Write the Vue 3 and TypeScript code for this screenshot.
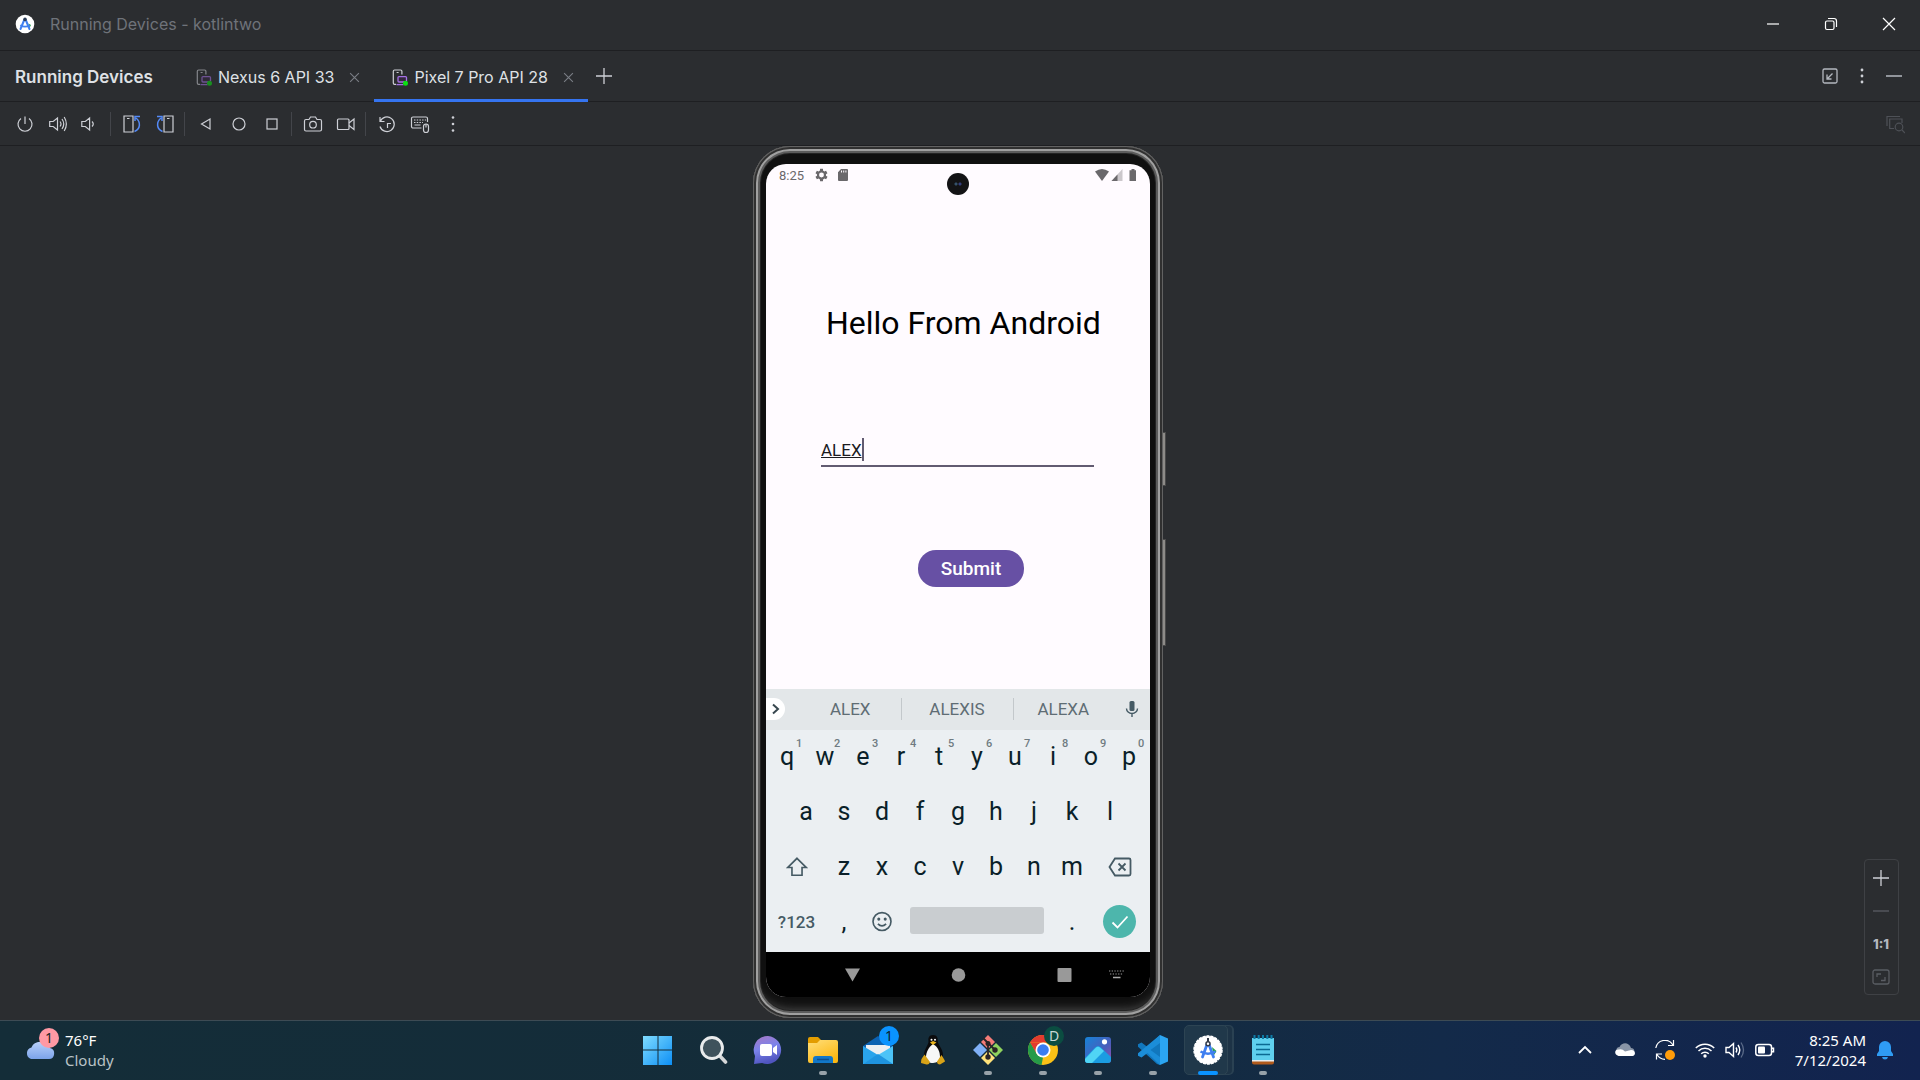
<script setup lang="ts">
import { ref } from 'vue'

interface Key {
  label: string
  hint?: string
}

const toolWindowTabs = [
  { name: 'Nexus 6 API 33', active: false },
  { name: 'Pixel 7 Pro API 28', active: true },
]

const topRow: Key[] = 'qwertyuiop'.split('').map((label, i) => ({ label, hint: String((i + 1) % 10) }))
const homeRow: string[] = 'asdfghjkl'.split('')
const bottomRow: string[] = 'zxcvbnm'.split('')
const suggestions: string[] = ['ALEX', 'ALEXIS', 'ALEXA']

const name = ref('ALEX')
</script>

<template>
  <div class="window">
    <header class="titlebar">
      <svg class="app-logo" viewBox="0 0 20 20" aria-hidden="true">
        <circle cx="10" cy="10" r="9.3" fill="#fff" />
        <path d="M13.5 9.5l2.5 1.5-1.5 3z" fill="#2ba24c" />
        <path d="M9.2 6 5.5 15M10.8 6l3.7 9" stroke="#3f7ff0" stroke-width="2" stroke-linecap="round" />
        <path d="M5.3 11.2q4.7 3 9.4 0" fill="none" stroke="#3f7ff0" stroke-width="1.8" />
        <circle cx="10" cy="5.4" r="1.8" fill="#2b3c55" />
      </svg>
      <h1>Running Devices - kotlintwo</h1>
      <div class="window-controls">
        <button aria-label="Minimize"><svg viewBox="0 0 16 16"><path d="M2 8h12" /></svg></button>
        <button aria-label="Restore">
          <svg viewBox="0 0 16 16"><rect x="2.5" y="5" width="8.5" height="8.5" rx="1.5" /><path d="M5 2.5h6a2.5 2.5 0 0 1 2.5 2.5v6" /></svg>
        </button>
        <button aria-label="Close"><svg viewBox="0 0 16 16"><path d="M2 2l12 12M14 2 2 14" /></svg></button>
      </div>
    </header>

    <nav class="tabbar">
      <h2>Running Devices</h2>
      <div v-for="tab in toolWindowTabs" :key="tab.name" class="tab" :class="{ active: tab.active }">
        <button class="tab-name">
          <svg class="tab-icon" viewBox="0 0 16 17" aria-hidden="true">
            <path d="M4 15.3H2.6A1.3 1.3 0 0 1 1.3 14V2.3A1.3 1.3 0 0 1 2.6 1h6a1.3 1.3 0 0 1 1.3 1.3v3.200M4.600 3.500h2" fill="none" stroke="#ced0d6" stroke-width="1.2" />
            <rect x="6" y="7.6" width="8.5" height="5.4" rx="1" fill="#35283f" stroke="#a571e6" stroke-width="1.3" />
            <path d="M4.500 15.600h7" stroke="#a571e6" stroke-width="1.3" />
            <circle cx="13.5" cy="14.3" r="2.5" fill="#0be012" />
          </svg>
          {{ tab.name }}
        </button>
        <button class="tab-close" :aria-label="`Close ${tab.name}`">
          <svg viewBox="0 0 10 10"><path d="M1 1l8 8M9 1 1 9" /></svg>
        </button>
      </div>
      <button class="tab-add" aria-label="New tab"><svg viewBox="0 0 16 16"><path d="M8 0v16M0 8h16" /></svg></button>
      <div class="tab-actions">
        <button aria-label="Undock">
          <svg viewBox="0 0 18 18"><rect x="2" y="2" width="14" height="14" rx="1.5" /><path d="M11.500 6.500 6 12M6 7.500V12h4.500" /></svg>
        </button>
        <button aria-label="Options">
          <svg viewBox="0 0 18 18" class="dots"><circle cx="9" cy="3" r="1.4" /><circle cx="9" cy="9" r="1.4" /><circle cx="9" cy="15" r="1.4" /></svg>
        </button>
        <button aria-label="Hide"><svg viewBox="0 0 18 18"><path d="M1 9h16" stroke-width="1.5" /></svg></button>
      </div>
    </nav>

    <div class="toolbar">
      <button aria-label="Power"><svg viewBox="0 0 20 20"><path d="M10 2.500V10M6 4.500a7 7 0 1 0 8 0" /></svg></button>
      <button aria-label="Volume up">
        <svg viewBox="0 0 20 20"><path d="M1.700 7.500h3.500L9.500 4v12L5.200 12.500H1.700zM12 7.500q2 2.500 0 5M14 5q3.500 5 0 10M16.200 3q4.300 7 0 14" /></svg>
      </button>
      <button aria-label="Volume down">
        <svg viewBox="0 0 20 20"><path d="M.8 7.500h3.500L8.600 4v12L4.300 12.500H.8zM11 7.500q2.500 2.500 0 5" /></svg>
      </button>
      <i class="divider"></i>
      <button aria-label="Rotate left">
        <svg viewBox="0 0 20 20"><path d="M11 2H2v16h9zM5 4.500h2.500" /><path class="blue" d="M12.500 17.500c6-2.500 6.500-9.500 1.500-13.500M18 2.500h-5V7" /></svg>
      </button>
      <button aria-label="Rotate right">
        <svg viewBox="0 0 20 20"><path d="M9 2h9v16H9zM12 4.500h2.500" /><path class="blue" d="M7.500 17.500C1.500 15 1 8 6 4M2 2.500h5V7" /></svg>
      </button>
      <i class="divider"></i>
      <button aria-label="Back"><svg viewBox="0 0 20 20"><path d="M14 5v10L5.500 10z" /></svg></button>
      <button aria-label="Home"><svg viewBox="0 0 20 20"><circle cx="10" cy="10" r="6" /></svg></button>
      <button aria-label="Overview"><svg viewBox="0 0 20 20"><rect x="5" y="5" width="10" height="10" /></svg></button>
      <i class="divider"></i>
      <button aria-label="Take screenshot">
        <svg viewBox="0 0 20 20"><path d="M3 5.500h3L7.500 3h5L14 5.500h3a1.500 1.500 0 0 1 1.500 1.500v8.500A1.500 1.500 0 0 1 17 17H3a1.500 1.500 0 0 1-1.500-1.500V7A1.500 1.500 0 0 1 3 5.500z" /><circle cx="10" cy="10.7" r="3.3" /></svg>
      </button>
      <button aria-label="Record screen">
        <svg viewBox="0 0 20 20"><rect x="1.5" y="5" width="11.5" height="10.5" rx="1" /><path d="M13 9l5-4v10.500l-5-4" /></svg>
      </button>
      <i class="divider"></i>
      <button aria-label="Reset">
        <svg viewBox="0 0 20 20"><path d="M3 3v4.500h4.500M3.200 7.500A7.300 7.300 0 1 1 3 12.500M10.500 14V9.500H14" /></svg>
      </button>
      <button aria-label="Hardware input">
        <svg viewBox="0 0 20 20"><path d="M11.500 14H3a1.500 1.500 0 0 1-1.500-1.500v-8A1.500 1.500 0 0 1 3 3h13a1.500 1.500 0 0 1 1.500 1.500V8M4.500 11h6" /><path d="M4 6h12M4 8.500h9" stroke-dasharray="1.5 1.2" /><rect x="13.5" y="10" width="5" height="8.5" rx="2.5" /><path d="M16 10v3.500" /></svg>
      </button>
      <button aria-label="More">
        <svg viewBox="0 0 20 20" class="dots"><circle cx="10" cy="3.5" r="1.3" /><circle cx="10" cy="10" r="1.3" /><circle cx="10" cy="16.5" r="1.3" /></svg>
      </button>
      <button class="inspect" aria-label="Inspect">
        <svg viewBox="0 0 20 20"><path d="M2 12V2.500h13M9 14.500H4.700V5H17v4M17 16l3 3" /><circle cx="14" cy="13" r="3.8" /></svg>
      </button>
    </div>

    <main class="stage">
      <div class="phone">
        <i class="side-button power"></i>
        <i class="side-button volume"></i>
        <div class="screen">
          <i class="camera"></i>
          <div class="status">
            <span>8:25</span>
            <svg viewBox="4 2 18 20" class="gear"><path fill-rule="evenodd" d="M19.400 13a7.500 7.500 0 0 0 0-2l2.100-1.600-2-3.500-2.500 1a7 7 0 0 0-1.700-1L15 3.200h-4l-.4 2.700a7 7 0 0 0-1.700 1l-2.500-1-2 3.500L6.600 11a7.500 7.500 0 0 0 0 2l-2.200 1.600 2 3.500 2.500-1q.8.600 1.700 1l.4 2.700h4l.4-2.700q.9-.4 1.700-1l2.500 1 2-3.500zM13 8.500a3.500 3.500 0 1 1 0 7 3.500 3.500 0 0 1 0-7z" /></svg>
            <svg viewBox="0 0 12 14" class="sd"><path fill-rule="evenodd" d="M4 1h6a1 1 0 0 1 1 1v10a1 1 0 0 1-1 1H2a1 1 0 0 1-1-1V4.200zM4 2.500v2h1v-2zM6.200 2.500v2h1v-2zM8.400 2.500v2h1v-2z" /></svg>
            <svg viewBox="0 0 42 14" class="signals">
              <path d="M0 3.500q7-5 14 0L7 13z" />
              <path d="M27.500 1v12H16.500z" opacity=".35" />
              <path d="M22.500 6.500V13h-6z" />
              <path d="M36.500 1h3v1.200H41V13h-6.500V2.200h2z" />
            </svg>
          </div>

          <form class="activity" @submit.prevent>
            <h3>Hello From Android</h3>
            <label class="field">
              <input v-model="name" type="text" aria-label="Name" spellcheck="false" />
              <i class="caret"></i>
            </label>
            <button class="submit" type="submit">Submit</button>
          </form>

          <section class="keyboard">
            <div class="suggestions">
              <button class="expand" aria-label="Expand"><svg viewBox="0 0 10 12"><path d="M2 1.500 7 6l-5 4.500" /></svg></button>
              <button v-for="word in suggestions" :key="word" class="word">{{ word }}</button>
              <button class="mic" aria-label="Voice input">
                <svg viewBox="0 0 14 18"><rect x="4.5" y="1" width="5" height="10" rx="1.5" fill="#455a64" /><path d="M1.500 8.500a5.500 5 0 0 0 11 0M7 13.500V17" fill="none" stroke="#455a64" stroke-width="1.4" /></svg>
              </button>
            </div>
            <div class="row">
              <button v-for="key in topRow" :key="key.label" class="key">{{ key.label }}<sup>{{ key.hint }}</sup></button>
            </div>
            <div class="row">
              <button v-for="letter in homeRow" :key="letter" class="key">{{ letter }}</button>
            </div>
            <div class="row">
              <button class="key wide" aria-label="Shift">
                <svg viewBox="0 0 24 24"><path d="M12 2.500 22 12.500h-4.500V21h-11v-8.500H2z" /></svg>
              </button>
              <button v-for="letter in bottomRow" :key="letter" class="key">{{ letter }}</button>
              <button class="key wide" aria-label="Delete">
                <svg class="delete" viewBox="0 0 24 20"><path d="M7 1.500h14a1.500 1.500 0 0 1 1.500 1.500v14a1.500 1.500 0 0 1-1.500 1.500H7L1.500 10zM10.500 6.500l7 7M17.500 6.500l-7 7" /></svg>
              </button>
            </div>
            <div class="row">
              <button class="key wide symbols">?123</button>
              <button class="key">,</button>
              <button class="key" aria-label="Emoji">
                <svg viewBox="0 0 24 24"><circle cx="12" cy="11.5" r="9.8" /><path d="M7.500 14q4.500 4.500 9 0" /><circle cx="8.5" cy="8.8" r=".8" /><circle cx="15.5" cy="8.8" r=".8" /></svg>
              </button>
              <button class="space" aria-label="Space"></button>
              <button class="key">.</button>
              <button class="key wide" aria-label="Done">
                <span class="done"><svg viewBox="0 0 20 20"><path d="M2.500 10.500 7.500 15.500 17.500 4.500" /></svg></span>
              </button>
            </div>
          </section>

          <div class="navbar">
            <button aria-label="Hide keyboard"><svg viewBox="0 0 16 14"><path d="M0 0h16L8 14z" /></svg></button>
            <button aria-label="Home"><svg viewBox="0 0 14 14"><circle cx="7" cy="7" r="6.8" /></svg></button>
            <button aria-label="Overview"><svg viewBox="0 0 14 14"><rect width="14" height="14" rx="1" /></svg></button>
            <button class="ime" aria-label="Switch keyboard">
              <svg viewBox="0 0 15 9"><path d="M0 1h15M1 4h13" fill="none" stroke="#999" stroke-width="1.2" stroke-dasharray="1.3 1.4" /><path d="M4 7.500h7.500" stroke="#aaa" stroke-width="1.4" /></svg>
            </button>
          </div>
        </div>
      </div>

      <div class="zoom-panel">
        <button aria-label="Zoom in"><svg viewBox="0 0 18 18"><path d="M9 1v16M1 9h16" stroke="#ced0d6" /></svg></button>
        <button aria-label="Zoom out"><svg viewBox="0 0 18 18"><path d="M1 9h16" stroke="#5a5d63" /></svg></button>
        <button class="actual">1:1</button>
        <button aria-label="Fit to screen">
          <svg viewBox="0 0 18 18"><rect x="1" y="2" width="16" height="14" rx="2" stroke="#5a5d63" /><path d="M5 9V6h4M13 9v3.500H9" stroke="#5a5d63" /></svg>
        </button>
      </div>
    </main>

    <footer class="taskbar">
      <button class="weather">
        <span class="weather-icon">
          <svg viewBox="0 0 30 20">
            <defs><linearGradient id="cloud" x2="0" y2="1"><stop stop-color="#b8d0fa" /><stop offset="1" stop-color="#7ba3ea" /></linearGradient></defs>
            <path d="M6 19a6 6 0 0 1 .5-11.500C9 1 18 .5 21 5q3 .5 4 3a5.600 5.600 0 0 1-1 11z" fill="url(#cloud)" />
          </svg>
          <b class="badge pink">1</b>
        </span>
        <span class="weather-text"><span>76°F</span><span class="dim">Cloudy</span></span>
      </button>

      <nav class="apps">
        <button aria-label="Start">
          <svg viewBox="0 0 30 30">
            <defs><linearGradient id="win" x2="1" y2="1"><stop stop-color="#7fdcff" /><stop offset="1" stop-color="#0d8ff5" /></linearGradient></defs>
            <path d="M0 1h14.500v13.500H0zM15.500 1H29v13.500H15.500zM0 15.500h14.500V30H0zM15.500 15.500H29V30H15.500z" fill="url(#win)" />
          </svg>
        </button>
        <button aria-label="Search">
          <svg viewBox="0 0 30 30"><path d="M21 20l6.500 7" stroke="#d5d7d8" stroke-width="3.6" stroke-linecap="round" /><circle cx="14" cy="13" r="10.5" fill="#3f525c" stroke="#e9ebec" stroke-width="2.8" /></svg>
        </button>
        <button aria-label="Chat">
          <svg viewBox="0 0 30 30">
            <defs><linearGradient id="chat" x2=".3" y2="1"><stop stop-color="#a878c4" /><stop offset=".5" stop-color="#7b83eb" /><stop offset="1" stop-color="#5055c0" /></linearGradient></defs>
            <path d="M15 1a14 14 0 1 1-6 27L1 29l1-8A14 14 0 0 1 15 1z" fill="url(#chat)" /><rect x="7" y="9" width="12" height="12" rx="2" fill="#fff" /><path d="M20 13l4-3v10l-4-3z" fill="#fff" />
          </svg>
        </button>
        <button class="running" aria-label="File Explorer">
          <svg viewBox="0 0 30 30">
            <defs><linearGradient id="folder" x2=".6" y2="1"><stop stop-color="#ffdf7a" /><stop offset="1" stop-color="#fcb813" /></linearGradient></defs>
            <path d="M0 4a2 2 0 0 1 2-2h8l3 3v4H0z" fill="#e39d00" /><path d="M0 8h9l3-3h16a2 2 0 0 1 2 2v19a2 2 0 0 1-2 2H2a2 2 0 0 1-2-2z" fill="url(#folder)" /><path d="M5 28v-4a3 3 0 0 1 3-3h14a3 3 0 0 1 3 3v4z" fill="#1277c8" /><path d="M9 24.500h12" stroke="#0b4f90" stroke-width="1.5" />
          </svg>
        </button>
        <button aria-label="Mail">
          <svg viewBox="0 0 30 30"><path d="M0 11 15 1l15 10v9H0z" fill="#0c62b2" /><path d="M3 10h24v6l-12 8L3 16z" fill="#eceff2" /><path d="M0 11v18h30z" fill="#2aa4ec" /><path d="M30 11v18H4L0 29z" fill="#4cc3f7" /><path d="M0 29h30L15 19z" fill="#1f94e0" /></svg>
          <b class="badge blue-badge">1</b>
        </button>
        <button aria-label="Linux">
          <svg viewBox="0 0 30 30"><path d="M15 0c-4 0-5 3-4.500 6 .3 4-4.500 8-4.500 14 0 4 3 8 9 8s10-4 10-8c0-6-5-10-5.300-14C20 3 19 0 15 0z" fill="#0b0b0d" /><path d="M15 9c-4 3-7 8-7 13 0 4 3 6 7 6s7-3 7-6c0-5-2-10-7-13z" fill="#f7f7f7" /><circle cx="13.5" cy="4.8" r="1" fill="#fff" /><circle cx="17" cy="4.8" r="1" fill="#fff" /><path d="M12 7.500 15 6l3.500 1.500L15 10z" fill="#eab41c" /><path d="M6.500 19.500 12 27q-1 3-3.500 2.500L3 28q0-2 .5-4zM23.500 20l3 5 .5 1.500-5 3q-3 0-3-3z" fill="#d9a317" /></svg>
        </button>
        <button class="running" aria-label="Git Bash">
          <svg viewBox="0 0 30 30"><path d="M15 0l7 7-7 7-7-7z" fill="#f57c78" /><path d="M23 8l7 7-7 7-7-7z" fill="#8fd35e" /><path d="M15 16l7 7-7 7-7-7z" fill="#ffe27a" /><path d="M7 8l7 7-7 7-7-7z" fill="#7fb0f7" /><path d="M15 8v14M10 3l5 5 7 7" stroke="#2a2426" stroke-width="1.8" fill="none" /><circle cx="15" cy="8.5" r="2.5" fill="#2a2426" /><circle cx="15" cy="22" r="2.7" fill="#2a2426" /><circle cx="22" cy="15" r="2.7" fill="#2a2426" /></svg>
        </button>
        <button class="running" aria-label="Chrome">
          <svg viewBox="0 0 30 30"><circle cx="15" cy="15" r="15" fill="#fbc116" /><path d="M2 7.500A15 15 0 0 1 28 7.500H15z" fill="#e33b2e" /><path d="M2 7.500 8.500 18.800 15 22.500 13.500 30A15 15 0 0 1 2 7.500z" fill="#269b48" /><path d="M2 7.500 15 7.500v7l-6.500 4.300z" fill="#e33b2e" /><path d="M2 7.500l6.500 11.300L6 22A15 15 0 0 1 2 7.500z" fill="#269b48" /><circle cx="15" cy="15" r="7.5" fill="#fff" /><circle cx="15" cy="15" r="5.8" fill="#3a7df0" /></svg>
          <b class="badge green">D</b>
        </button>
        <button class="running" aria-label="Photos">
          <svg viewBox="0 0 30 30">
            <defs><linearGradient id="photo" x2="1" y2="1"><stop stop-color="#1683d8" /><stop offset=".6" stop-color="#4a5dbb" /><stop offset="1" stop-color="#9a4fae" /></linearGradient></defs>
            <rect x="2" y="2" width="26" height="26" rx="3" fill="url(#photo)" /><path d="M2 23 12 12.500q3-3 6 0L28 22v3a3 3 0 0 1-3 3H5a3 3 0 0 1-3-3z" fill="#1b9de2" /><path d="M2 24 12.500 13q2.500-2.500 5 0l3.500 3L9 28H5a3 3 0 0 1-3-3z" fill="#50d5f5" /><circle cx="21.5" cy="6.8" r="2.6" fill="#fff" />
          </svg>
        </button>
        <button class="running" aria-label="Visual Studio Code">
          <svg viewBox="0 0 30 30"><path d="M22 0 9.500 12 3.500 7.500 0 9.200v2.600L19 29l3 1z" fill="#1177bd" /><path d="M22 30 9.500 18l-6 4.500L0 20.800v-2.600L22 0v8L12.500 15 22 22z" fill="#1b8dd8" /><path d="M22 0l8 3.500v23L22 30z" fill="#2ba5f2" /></svg>
        </button>
        <button class="running current" aria-label="Android Studio">
          <svg viewBox="0 0 30 30"><circle cx="15" cy="15" r="14" fill="#fff" stroke="#fff" stroke-width="1.5" stroke-dasharray="3 1" /><path d="M19 12l4.500 4-3 5z" fill="#2ba24c" /><path d="M14 9.500 9.500 22M16 9.500 20.500 22" stroke="#3f7ff0" stroke-width="2.8" stroke-linecap="round" /><path d="M7.500 16.500q7.500 4.500 15 0" fill="none" stroke="#3f7ff0" stroke-width="2.5" /><path d="M15 3v4" stroke="#333b48" stroke-width="2" /><circle cx="15" cy="8.8" r="2" fill="#fff" stroke="#333b48" stroke-width="1.5" /></svg>
        </button>
        <button class="running" aria-label="Notepad">
          <svg viewBox="0 0 30 30"><path d="M4 25h22v2.500a2 2 0 0 1-2 2H6a2 2 0 0 1-2-2z" fill="#b05a1c" /><path d="M4 3h22v23.500H4z" fill="#e9eef0" /><path d="M4 3h22v22H4z" fill="#5fd0ee" /><path d="M8 9.500h14M8 14.500h14M8 19.500h14" stroke="#0b6a92" stroke-width="1.6" /><path d="M6.500 0v4M10.700 0v4M15 0v4M19.300 0v4M23.500 0v4" stroke="#0d7ba6" stroke-width="2" /></svg>
        </button>
      </nav>

      <div class="tray">
        <button aria-label="Show hidden icons"><svg viewBox="0 0 20 20"><path d="M4 13l6-6 6 6" fill="none" stroke="#fff" stroke-width="1.8" /></svg></button>
        <button aria-label="OneDrive"><svg viewBox="0 0 20 20"><path d="M3 14C0 12 1 7 4.500 7 7 2 14 2 16 8c3 0 4 3 3 5z" fill="#8995a6" /><path d="M3.500 16C-1 15-1 9 4 9.500q3-1 6 2l6-1.500c5 0 5 5.500 1.500 6z" fill="#fff" /></svg></button>
        <button aria-label="Update">
          <svg viewBox="0 0 20 20"><path d="M.8 8A9.300 9.300 0 0 1 18 5M18.500 0v5.500H13M2 14.500a9.300 9.300 0 0 0 8 4.800M1.500 19.500V14H7" fill="none" stroke="#fff" stroke-width="1.2" /><circle cx="15" cy="15" r="5" fill="#ff9c0a" /></svg>
        </button>
        <button class="system" aria-label="Quick settings">
          <svg viewBox="0 0 20 20"><path d="M.8 8a13 13 0 0 1 18.400 0M3.500 11a9.200 9.200 0 0 1 13 0M6.200 13.700a5.400 5.400 0 0 1 7.600 0" fill="none" stroke="#fff" stroke-width="1.5" /><circle cx="10" cy="16" r="1.7" fill="#fff" /></svg>
          <svg viewBox="0 0 20 20"><path d="M1 7.500h3L8.500 3.500v13L4 12.500H1zM11 7.500q1.700 2.500 0 5M13 5q3.500 5 0 10" fill="none" stroke="#fff" stroke-width="1.4" /><path d="M16 2.500q5 7.500 0 15" fill="none" stroke="#5a6a88" stroke-width="1.3" /></svg>
          <svg viewBox="0 0 20 20"><rect x=".8" y="4.5" width="15.7" height="11" rx="2.5" fill="none" stroke="#fff" stroke-width="1.5" /><rect x="3" y="6.5" width="7" height="7" rx="1" fill="#fff" /><path d="M17 8.200h1.500v3.600H17" stroke="#fff" stroke-width="1.5" fill="none" /></svg>
        </button>
        <button class="clock">
          <span>8:25 AM</span><span>7/12/2024</span>
        </button>
        <button class="bell" aria-label="Notifications"><svg viewBox="0 0 20 20"><path d="M2 16v-2l2-3V7a6 6 0 0 1 12 0v4l2 3v2zM7 17h6q-.5 2.500-3 2.500T7 17z" fill="#2f9cf4" /></svg></button>
      </div>
    </footer>
  </div>
</template>

<style>
body {
  margin: 0;
  background: #2b2d30;
}
</style>

<style scoped>
* {
  box-sizing: border-box;
}
.window {
  display: flex;
  flex-direction: column;
  min-height: 100vh;
  background: #2b2d30;
  color: #dfe1e5;
  font-family: Inter, "Noto Sans", sans-serif;
}
button {
  display: flex;
  align-items: center;
  justify-content: center;
  margin: 0;
  padding: 0;
  border: 0;
  background: none;
  color: inherit;
  font: inherit;
}
h1,
h2,
h3 {
  margin: 0;
  white-space: nowrap;
}
svg {
  display: block;
  flex: none;
}
.titlebar,
.tabbar,
.toolbar {
  display: flex;
  align-items: center;
  border-bottom: 1px solid #1e1f22;
}
.titlebar {
  height: 51px;
  padding: 0 2px 2px 15px;
}
.app-logo {
  width: 20px;
  height: 20px;
}
.titlebar h1 {
  margin-left: 15px;
  font-size: 16px;
  font-weight: 400;
  color: #6f737a;
}
.window-controls {
  display: flex;
  margin-left: auto;
}
.window-controls button {
  width: 58px;
  height: 48px;
}
.window-controls svg {
  width: 16px;
  height: 16px;
  fill: none;
  stroke: #fff;
  stroke-width: 1.2;
}
.tabbar {
  height: 51px;
  padding: 0 10px 0 15px;
  font-size: 16px;
}
.tabbar h2 {
  width: 163px;
  padding-top: 2px;
  font-size: 17px;
  font-weight: 600;
}
.tab {
  display: flex;
  align-items: center;
  align-self: stretch;
  gap: 15px;
  padding: 2px 14px 0 18px;
}
.tab.active {
  border-bottom: 3px solid #3574f0;
  margin-bottom: -1px;
  padding-top: 4px;
}
.tab-name {
  gap: 6px;
  white-space: nowrap;
}
.tab-icon {
  width: 16px;
  height: 17px;
  opacity: 0.55;
}
.active .tab-icon {
  opacity: 1;
}
.tab-close svg {
  width: 11px;
  height: 11px;
  fill: none;
  stroke: #7a7e85;
}
.tab-add {
  margin-left: 8px;
}
.tab-add svg {
  width: 16px;
  height: 16px;
  stroke: #ced0d6;
  stroke-width: 1.3;
}
.tab-actions {
  display: flex;
  margin-left: auto;
}
.tab-actions button {
  width: 32px;
  height: 33px;
}
.tab-actions svg {
  width: 18px;
  height: 18px;
  fill: none;
  stroke: #b4b8bf;
  stroke-width: 1.3;
}
.tab-actions .dots,
.toolbar .dots {
  fill: #ced0d6;
  stroke: none;
}
.toolbar {
  height: 44px;
  padding: 0 9px 0 8px;
}
.toolbar button {
  width: 33px;
  height: 33px;
}
.toolbar svg {
  width: 20px;
  height: 20px;
  fill: none;
  stroke: #ced0d6;
  stroke-width: 1.2;
}
.toolbar .blue {
  stroke: #548af7;
  stroke-width: 1.5;
}
.divider {
  width: 1px;
  height: 24px;
  margin: 0 4px 0 3px;
  background: #43454a;
}
.toolbar .inspect {
  margin-left: auto;
}
.toolbar .inspect svg {
  stroke: #4e5157;
}
.stage {
  position: relative;
  display: flex;
  flex: 1;
  justify-content: center;
  padding: 0 4px 2px 0;
}
.phone {
  position: relative;
  display: flex;
  width: 410px;
  padding: 18px 13px 21px;
  border-radius: 37px;
  background: #101010;
  box-shadow:
    inset 0 0 0 1px #626262,
    inset 0 0 0 3px #303030,
    inset 0 0 0 5px #a0a0a0,
    inset 0 0 0 7px #5c5c5c,
    inset 0 0 0 8px #242424,
    inset 0 -12px 10px -3px #484848;
}
.side-button {
  position: absolute;
  left: 100%;
  width: 3px;
  border: 1px solid #4a4a4a;
  border-left: 0;
  background: #8d8b88;
}
.power {
  top: 286px;
  height: 54px;
}
.volume {
  top: 393px;
  height: 107px;
}
.screen {
  position: relative;
  display: flex;
  flex: 1;
  flex-direction: column;
  overflow: hidden;
  border-radius: 20px;
  background: #fffbff;
  font-family: Roboto, sans-serif;
}
.camera {
  position: absolute;
  top: 9px;
  left: 181px;
  width: 22px;
  height: 22px;
  border-radius: 50%;
  background:
    radial-gradient(circle at 9px 11px, #35526b 1px, transparent 2px),
    radial-gradient(circle at 13px 11px, #343e7e 1px, transparent 2px),
    #131315;
}
.status {
  display: flex;
  align-items: center;
  height: 24px;
  padding: 0 13px 2px;
  color: #6a686b;
  fill: #6a686b;
  font-size: 13px;
}
.gear {
  width: 13px;
  height: 14px;
  margin: 0 9px 0 11px;
}
.sd {
  width: 12px;
  height: 14px;
}
.signals {
  width: 42px;
  height: 14px;
  margin-left: auto;
}
.activity {
  display: flex;
  flex: 1;
  flex-direction: column;
  align-items: flex-start;
  padding-top: 115px;
  color: #1c1b1f;
}
.activity h3 {
  margin-left: 60px;
  color: #000;
  font-size: 32px;
  font-weight: 400;
  line-height: 40px;
}
.field {
  display: flex;
  align-items: center;
  width: 273px;
  height: 32px;
  margin: 92px 0 0 55px;
  padding-bottom: 1px;
  border-bottom: 2px solid #625b71;
}
.field input {
  width: auto;
  padding: 0;
  border: 0;
  outline: 0;
  background: none;
  color: inherit;
  font: 17px/24px Roboto, sans-serif;
  text-decoration: underline;
  text-underline-offset: 1px;
  field-sizing: content;
}
.caret {
  width: 2px;
  height: 23px;
  background: #625b71;
}
.submit {
  width: 106px;
  height: 37px;
  margin: 83px 0 0 152px;
  border-radius: 18px;
  background: #6750a4;
  color: #fff;
  font-size: 19px;
  font-weight: 500;
}
.keyboard {
  background: #ebeff2;
  color: #0a1f29;
}
.suggestions {
  display: grid;
  grid-template-columns: 34px 1fr 112px 1fr 37px;
  align-items: center;
  height: 41px;
  padding-bottom: 1px;
  background: #e3e7e9;
  color: #5f6d74;
  font-size: 17px;
}
.expand {
  width: 19px;
  height: 22px;
  border-radius: 0 11px 11px 0;
  background: #fff;
}
.expand svg {
  width: 10px;
  height: 12px;
  fill: none;
  stroke: #37474f;
  stroke-width: 2;
}
.word {
  height: 22px;
}
.word + .word {
  border-left: 1px solid #c3c8cb;
}
.mic svg {
  width: 14px;
  height: 18px;
}
.row {
  display: flex;
  justify-content: center;
  height: 55px;
}
.row:last-child {
  height: 57px;
}
.key {
  position: relative;
  width: 38px;
  height: 55px;
  padding-bottom: 2px;
  font-size: 25px;
}
.key sup {
  position: absolute;
  top: 7px;
  left: 28px;
  color: #6f7b81;
  font-size: 11px;
  font-weight: 500;
  line-height: 13px;
}
.key svg {
  width: 22px;
  height: 22px;
  fill: none;
  stroke: #455a64;
  stroke-width: 1.8;
}
.key .delete {
  width: 24px;
  height: 20px;
}
.wide {
  width: 57px;
}
.symbols {
  color: #455a64;
  font-size: 17px;
  font-weight: 500;
}
.space {
  width: 134px;
  height: 27px;
  margin: 12px 9px;
  border-radius: 3px;
  background: #c9cdd0;
}
.done {
  display: flex;
  align-items: center;
  justify-content: center;
  width: 33px;
  height: 33px;
  border-radius: 50%;
  background: #4db6ac;
}
.key .done svg {
  width: 20px;
  height: 20px;
  stroke: #fff;
}
.navbar {
  display: grid;
  grid-template-columns: 33px repeat(3, 1fr) 33px;
  height: 45px;
  background: #000;
  fill: #999;
}
.navbar button:first-child {
  grid-column: 2;
}
.navbar svg {
  width: 15px;
  height: 14px;
}
.navbar .ime {
  justify-content: flex-start;
}
.navbar .ime svg {
  height: 9px;
  margin-left: -8px;
}
.zoom-panel {
  position: absolute;
  right: 21px;
  bottom: 25px;
  width: 35px;
  padding: 1px 0;
  border: 1px solid #3f4145;
  border-radius: 4px;
}
.zoom-panel button {
  width: 32px;
  height: 33px;
}
.zoom-panel svg {
  width: 18px;
  height: 18px;
  fill: none;
  stroke-width: 1.3;
}
.zoom-panel .actual {
  color: #b4b8bf;
  font-size: 13px;
  font-weight: 800;
}
.taskbar {
  display: grid;
  grid-template-columns: 1fr auto 1fr;
  align-items: center;
  height: 60px;
  padding-bottom: 2px;
  border-top: 1px solid #3d4b54;
  background: linear-gradient(90deg, #142d38, #142c3a 50%, #132a49 75%, #12234f);
  color: #fff;
  font-family: "Noto Sans", sans-serif;
  font-size: 15px;
  line-height: 20px;
}
.weather {
  justify-self: start;
  gap: 10px;
  padding-left: 25px;
}
.weather-icon {
  position: relative;
}
.weather-icon svg {
  width: 30px;
  height: 20px;
}
.weather-text,
.clock {
  display: flex;
  flex-direction: column;
}
.weather-text {
  align-items: flex-start;
}
.dim {
  color: #b9c2c6;
}
.badge {
  position: absolute;
  width: 20px;
  height: 20px;
  border-radius: 50%;
  font-size: 14px;
  font-weight: 400;
  text-align: center;
}
.pink {
  top: -12px;
  left: 14px;
  background: #ff99a4;
  color: #222;
}
.blue-badge {
  top: 2px;
  right: 6px;
  background: #0a93ff;
  color: #0b1d2c;
}
.green {
  top: 2px;
  right: 6px;
  background: #0b4d41;
  color: #c9d8d4;
}
.apps {
  display: flex;
}
.apps button {
  position: relative;
  width: 55px;
  height: 52px;
}
.apps svg {
  position: relative;
  width: 30px;
  height: 30px;
}
.running::after {
  position: absolute;
  bottom: 1px;
  left: 24px;
  width: 8px;
  height: 4px;
  border-radius: 2px;
  background: #98a2a9;
  content: "";
}
.current::before {
  position: absolute;
  inset: 1px 7px 1px 4px;
  border: 1px solid #2d4453;
  border-radius: 5px;
  background: #20384a;
  box-shadow: 5px 0 0 -1px #1d3346, 6px 0 0 0 #2a4152;
  content: "";
}
.current::after {
  left: 18px;
  width: 20px;
  background: #0a93ff;
}
.tray {
  display: flex;
  align-items: center;
  justify-self: end;
  padding-right: 25px;
}
.tray svg {
  width: 20px;
  height: 20px;
}
.tray > button:not(.system, .clock, .bell) {
  width: 40px;
}
.system {
  gap: 10px;
  margin: 0 20px 0 10px;
}
.clock {
  align-items: flex-end;
}
.bell {
  margin-left: 9px;
}
</style>
